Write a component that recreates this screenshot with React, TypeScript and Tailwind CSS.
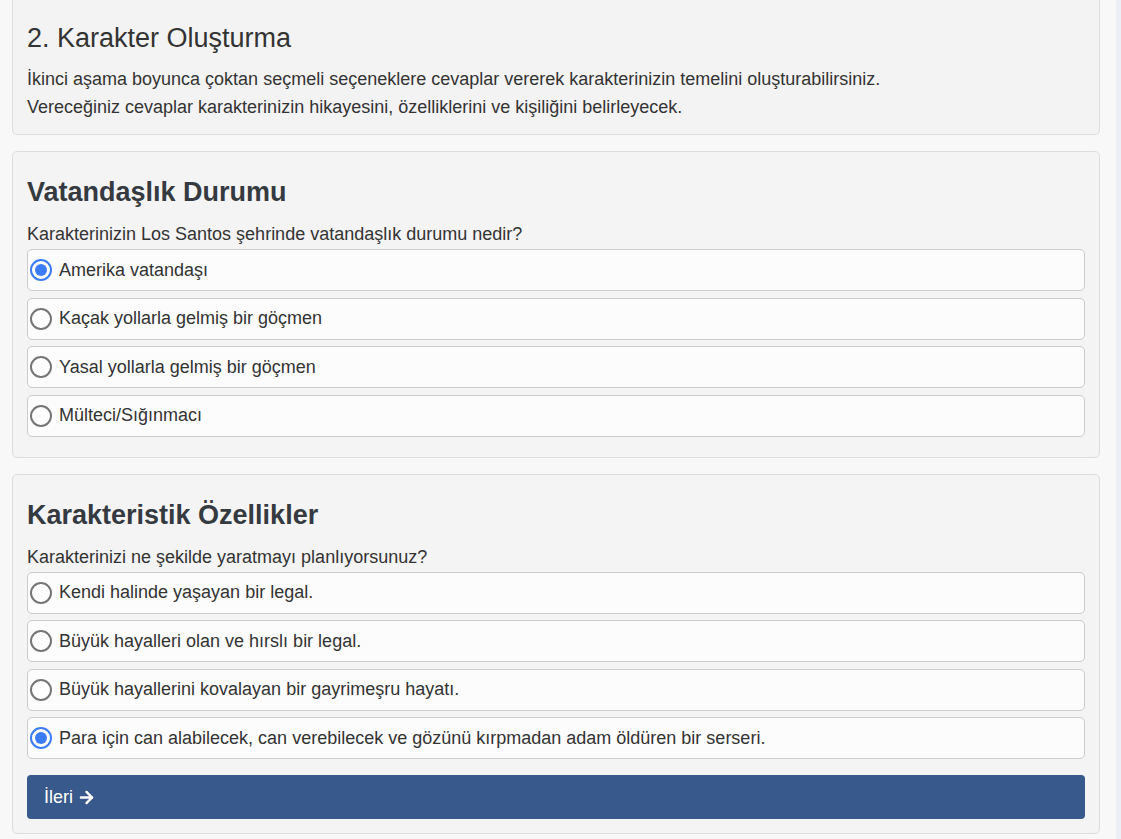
import { useState } from 'react';
import { ArrowRight } from 'lucide-react';

const citizenship = [
  'Amerika vatandaşı',
  'Kaçak yollarla gelmiş bir göçmen',
  'Yasal yollarla gelmiş bir göçmen',
  'Mülteci/Sığınmacı',
];

const traits = [
  'Kendi halinde yaşayan bir legal.',
  'Büyük hayalleri olan ve hırslı bir legal.',
  'Büyük hayallerini kovalayan bir gayrimeşru hayatı.',
  'Para için can alabilecek, can verebilecek ve gözünü kırpmadan adam öldüren bir serseri.',
];

function Radio({ checked }: { checked: boolean }) {
  return checked ? (
    <span className="w-[22px] h-[22px] shrink-0 rounded-full border-2 border-[#3b7cf6] bg-white flex items-center justify-center">
      <span className="w-[12px] h-[12px] rounded-full bg-[#3b7cf6]" />
    </span>
  ) : (
    <span className="w-[22px] h-[22px] shrink-0 rounded-full border-2 border-[#767676] bg-white" />
  );
}

function Question({
  title,
  question,
  options,
  selected,
  onSelect,
}: {
  title: string;
  question: string;
  options: string[];
  selected: number;
  onSelect: (i: number) => void;
}) {
  return (
    <>
      <h3 className="text-[27px] leading-[32px] font-bold text-[#343a40]">{title}</h3>
      <p className="mt-[15px] text-[18px] leading-[22px] text-[#333]">{question}</p>
      <div className="mt-[4px] flex flex-col gap-[6.5px]">
        {options.map((opt, i) => (
          <label
            key={opt}
            onClick={() => onSelect(i)}
            className="h-[42px] flex items-center gap-[7px] pl-[2px] border border-[#cccccc] rounded-[5px] bg-[#fcfcfc] cursor-pointer"
          >
            <Radio checked={selected === i} />
            <span className="text-[18px] text-[#333]">{opt}</span>
          </label>
        ))}
      </div>
    </>
  );
}

export default function App() {
  const [citizen, setCitizen] = useState(0);
  const [trait, setTrait] = useState(3);

  return (
    <div className="min-h-[839px] h-[839px] overflow-hidden flex bg-[#f8f8f8] font-['Liberation_Sans',Arial,sans-serif]">
      <div className="flex-1 pl-3 pr-4">
        {/* intro card */}
        <div className="-mt-[10px] border border-[#dddddd] rounded-[5px] bg-[#f3f3f3] px-[14px] pt-[31px] pb-[13px]">
          <h2 className="text-[27px] leading-[32px] text-[#333]">2. Karakter Oluşturma</h2>
          <div className="mt-[11px] text-[18px] leading-[28px] text-[#333]">
            <p>İkinci aşama boyunca çoktan seçmeli seçeneklere cevaplar vererek karakterinizin temelini oluşturabilirsiniz.</p>
            <p>Vereceğiniz cevaplar karakterinizin hikayesini, özelliklerini ve kişiliğini belirleyecek.</p>
          </div>
        </div>

        <div className="mt-[16px] border border-[#dddddd] rounded-[5px] bg-[#f4f4f4] px-[14px] pt-[24px] pb-[20px]">
          <Question
            title="Vatandaşlık Durumu"
            question="Karakterinizin Los Santos şehrinde vatandaşlık durumu nedir?"
            options={citizenship}
            selected={citizen}
            onSelect={setCitizen}
          />
        </div>

        <div className="mt-[16px] border border-[#dddddd] rounded-[5px] bg-[#f4f4f4] px-[14px] pt-[24px] pb-[14px]">
          <Question
            title="Karakteristik Özellikler"
            question="Karakterinizi ne şekilde yaratmayı planlıyorsunuz?"
            options={traits}
            selected={trait}
            onSelect={setTrait}
          />
          <button className="mt-[16px] w-full h-[44px] rounded-[4px] bg-[#38598b] text-white text-[18px] flex items-center gap-[4px] pl-[17px]">
            İleri
            <ArrowRight size={19} strokeWidth={3} />
          </button>
        </div>
      </div>
      <div className="w-[5px] bg-[#eceff5]" />
    </div>
  );
}
